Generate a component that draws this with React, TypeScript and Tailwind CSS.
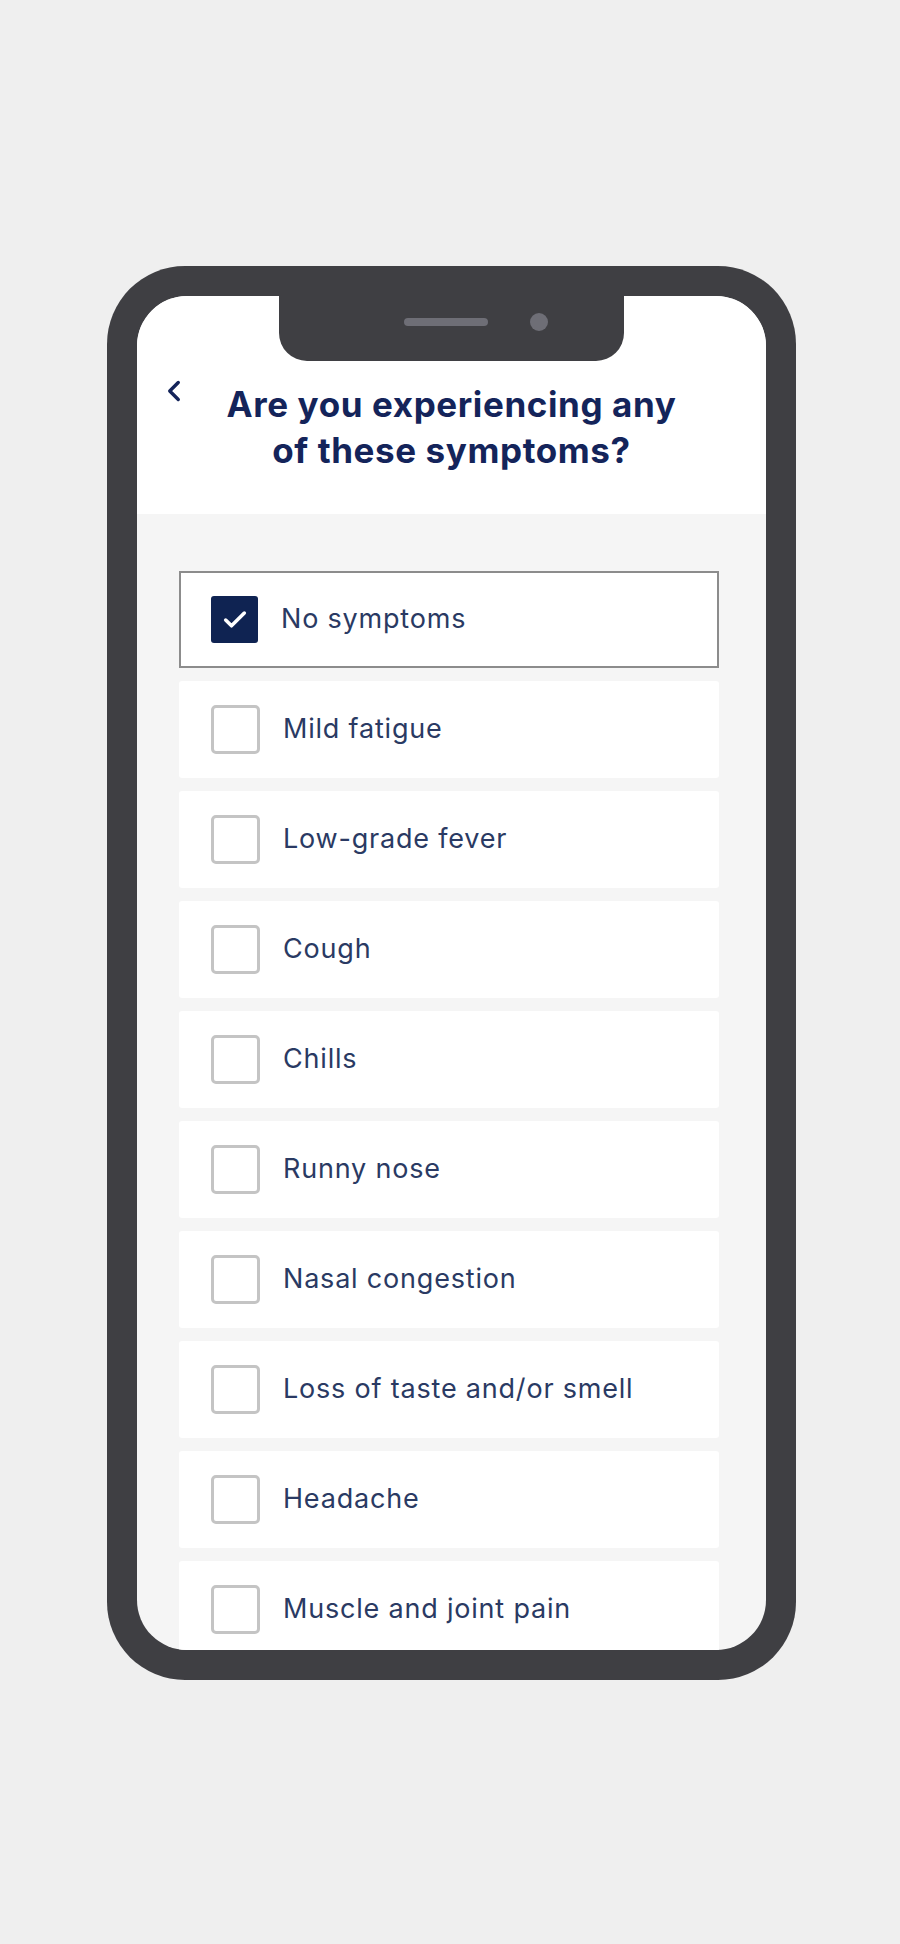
import { Check, ChevronLeft } from 'lucide-react'

const symptoms = [
  'No symptoms',
  'Mild fatigue',
  'Low-grade fever',
  'Cough',
  'Chills',
  'Runny nose',
  'Nasal congestion',
  'Loss of taste and/or smell',
  'Headache',
  'Muscle and joint pain',
]

function SymptomRow({ label, checked }: { label: string; checked: boolean }) {
  return (
    <div
      className={
        checked
          ? 'flex items-center h-[97px] shrink-0 bg-white border-2 border-[#8c8c8c] pl-[30px]'
          : 'flex items-center h-[97px] shrink-0 bg-white rounded-[3px] pl-[32px]'
      }
    >
      {checked ? (
        <div className="w-[47px] h-[47px] rounded-[3px] bg-[#0f2352] flex items-center justify-center">
          <Check className="w-[28px] h-[28px] text-white" strokeWidth={3} />
        </div>
      ) : (
        <div className="w-[49px] h-[49px] rounded-[5px] border-[3px] border-[#c4c4c4] bg-white" />
      )}
      <span className="ml-[23px] text-[27px] tracking-[0.8px] text-[#2a3a63] font-['Inter',sans-serif]">
        {label}
      </span>
    </div>
  )
}

export default function App() {
  return (
    <div className="min-h-[1944px] w-full bg-[#efefef] pt-[266px] pl-[107px]">
      <div className="relative w-[689px] h-[1414px] bg-[#3f3f43] rounded-[78px] p-[30px]">
        <div className="relative h-full w-full bg-[#f5f5f5] rounded-[50px] overflow-hidden flex flex-col">
          {/* notch */}
          <div className="absolute left-[142px] top-0 w-[345px] h-[65px] bg-[#3f3f43] rounded-b-[28px] flex items-center justify-center gap-[42px] pl-[48px] pb-[14px] z-10">
            <div className="w-[84px] h-[8px] rounded-full bg-[#6e6e76]" />
            <div className="w-[18px] h-[18px] rounded-full bg-[#6e6e76]" />
          </div>

          <div className="h-[218px] shrink-0 bg-white relative">
            <ChevronLeft
              className="absolute left-[20px] top-[78px] w-[34px] h-[34px] text-[#14245a]"
              strokeWidth={2.4}
            />
            <h1 className="pt-[85px] text-center text-[35px] leading-[46px] tracking-[0.6px] font-bold text-[#14245a] font-['Inter',sans-serif]">
              Are you experiencing any
              <br />
              of these symptoms?
            </h1>
          </div>

          <div className="flex flex-col gap-[13px] pt-[57px] pl-[42px] pr-[47px]">
            {symptoms.map((s, i) => (
              <SymptomRow key={s} label={s} checked={i === 0} />
            ))}
          </div>
        </div>
      </div>
    </div>
  )
}
